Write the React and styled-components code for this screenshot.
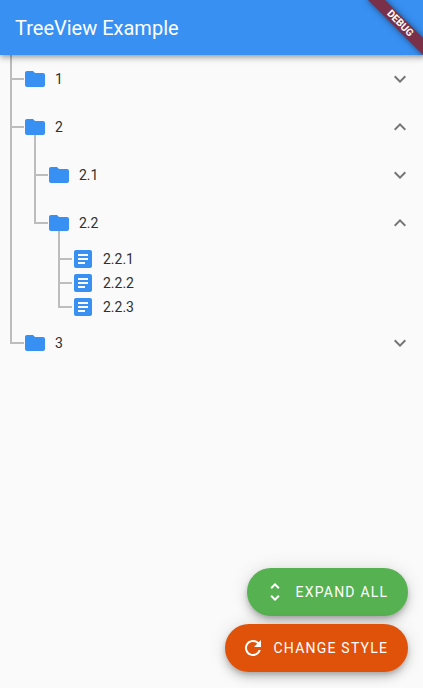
import React, { useState } from "react";
import styled, { createGlobalStyle, css } from "styled-components";

const GlobalStyle = createGlobalStyle`
  *, *::before, *::after { box-sizing: border-box; }
  body {
    margin: 0;
    background: #fafafa;
    font-family: Roboto, "Liberation Sans", sans-serif;
    color: #303030;
  }
`;

const BLUE = "#3890f2";
const LINE = "#bdbdbd";

const Page = styled.div`
  position: relative;
  display: flex;
  flex-direction: column;
  height: 100vh;
  overflow: hidden;
`;

const AppBar = styled.header`
  z-index: 1;
  flex: none;
  display: flex;
  align-items: center;
  height: 55px;
  padding: 0 15px;
  background: ${BLUE};
  box-shadow: 0 2px 4px -1px rgba(0, 0, 0, 0.2), 0 4px 5px rgba(0, 0, 0, 0.14),
    0 1px 10px rgba(0, 0, 0, 0.12);
`;

const Title = styled.h1`
  margin: 0;
  color: #fff;
  font-size: 20px;
  font-weight: 400;
  line-height: 24px;
`;

const DebugBanner = styled.div`
  position: absolute;
  z-index: 2;
  top: 26.5px;
  right: -40px;
  width: 80px;
  height: 12px;
  transform-origin: 40px -26.5px;
  transform: rotate(45deg);
  background: #7b3049;
  box-shadow: 0 0 6px rgba(0, 0, 0, 0.5);
  color: #fff;
  font-size: 10.2px;
  font-weight: 700;
  line-height: 12px;
  text-align: center;
`;

const Tree = styled.ul`
  flex: 1;
  margin: 0 0 0 -1px;
  padding: 0;
  list-style: none;
`;

const Branch = styled.ul`
  margin: 0;
  padding: 0;
  list-style: none;
`;

const NodeItem = styled.li`
  display: flex;
`;

const Gutter = styled.div`
  flex: none;
  display: flex;
  flex-direction: column;
  width: 14px;
  margin: 0 -1px 0 11px;
`;

const Elbow = styled.div`
  height: ${(p) => (p.$leaf ? 13 : 25)}px;
  border-left: 2px solid ${LINE};
  border-bottom: 2px solid ${LINE};
`;

const Trunk = styled.div`
  flex: 1;
  border-left: 2px solid ${(p) => (p.$last ? "transparent" : LINE)};
`;

const NodeBody = styled.div`
  flex: 1;
`;

const Row = styled.div`
  display: flex;
  align-items: center;
  gap: 8px;
  height: ${(p) => (p.$leaf ? 24 : 48)}px;
  padding-right: 11px;
  font-size: 14px;
  line-height: 20px;
  ${(p) => !p.$leaf && css`cursor: pointer;`}
`;

const IconSlot = styled.div`
  display: grid;
  grid-template-rows: 1fr 24px 1fr;
  width: 24px;
  height: 100%;
`;

const Stem = styled.div`
  grid-row: 3;
  width: 2px;
  margin: -4px 0 0 11px;
  background: ${LINE};
`;

const Label = styled.span`
  flex: 1;
`;

const Svg = styled.svg`
  display: block;
  flex: none;
  grid-row: 2;
  width: 24px;
  height: 24px;
  fill: ${(p) => p.$color};
`;

const Actions = styled.div`
  flex: none;
  display: flex;
  flex-direction: column;
  align-items: flex-end;
  gap: 8px;
  padding: 0 15px 16px;
`;

const ActionButton = styled.button`
  display: flex;
  align-items: center;
  gap: 8.5px;
  width: ${(p) => p.$width}px;
  height: 48px;
  padding: 0 0 0 16px;
  border: 0;
  border-radius: 24px;
  background: ${(p) => p.$color};
  box-shadow: 0 3px 5px -1px rgba(0, 0, 0, 0.2), 0 6px 10px rgba(0, 0, 0, 0.14),
    0 1px 18px rgba(0, 0, 0, 0.12);
  color: #fff;
  font: 400 14px/20px Roboto, "Liberation Sans", sans-serif;
  letter-spacing: 1.22px;
  white-space: nowrap;
  cursor: pointer;
`;

const PATHS = {
  folder:
    "M10 4H4c-1.1 0-1.99.9-1.99 2L2 18c0 1.1.9 2 2 2h16c1.1 0 2-.9 2-2V8c0-1.1-.9-2-2-2h-8l-2-2z",
  article:
    "M19 3H5c-1.1 0-2 .9-2 2v14c0 1.1.9 2 2 2h14c1.1 0 2-.9 2-2V5c0-1.1-.9-2-2-2zm-5 14H7v-2h7v2zm3-4H7v-2h10v2zm0-4H7V7h10v2z",
  down: "M16.59 8.59L12 13.17 7.41 8.59 6 10l6 6 6-6z",
  up: "M12 8l-6 6 1.41 1.41L12 10.83l4.59 4.58L18 14z",
  unfold:
    "M12 5.83L15.17 9l1.41-1.41L12 3 7.41 7.59 8.83 9 12 5.83zm0 12.34L8.83 15l-1.41 1.41L12 21l4.59-4.59L15.17 15 12 18.17z",
  refresh:
    "M17.65 6.35C16.2 4.9 14.21 4 12 4c-4.42 0-7.99 3.58-7.99 8s3.57 8 7.99 8c3.73 0 6.84-2.55 7.73-6h-2.08c-.82 2.33-3.04 4-5.65 4-3.31 0-6-2.69-6-6s2.69-6 6-6c1.66 0 3.14.69 4.22 1.78L13 11h7V4l-2.35 2.35z",
};

const Icon = ({ name, color }) => (
  <Svg viewBox="0 0 24 24" $color={color} aria-hidden="true">
    <path d={PATHS[name]} />
  </Svg>
);

const nodes = [
  { label: "1", children: [] },
  {
    label: "2",
    children: [
      { label: "2.1", children: [] },
      {
        label: "2.2",
        children: [{ label: "2.2.1" }, { label: "2.2.2" }, { label: "2.2.3" }],
      },
    ],
  },
  { label: "3", children: [] },
];

function TreeNode({ node, last, open, onToggle }) {
  const leaf = !node.children;
  const expanded = !leaf && open.includes(node.label);
  return (
    <NodeItem>
      <Gutter>
        <Elbow $leaf={leaf} />
        <Trunk $last={last} />
      </Gutter>
      <NodeBody>
        <Row $leaf={leaf} onClick={leaf ? undefined : () => onToggle(node.label)}>
          <IconSlot>
            <Icon name={leaf ? "article" : "folder"} color={BLUE} />
            {expanded && node.children.length > 0 && <Stem />}
          </IconSlot>
          <Label>{node.label}</Label>
          {!leaf && <Icon name={expanded ? "up" : "down"} color="#757575" />}
        </Row>
        {expanded && (
          <Branch>
            {node.children.map((child, i) => (
              <TreeNode
                key={child.label}
                node={child}
                last={i === node.children.length - 1}
                open={open}
                onToggle={onToggle}
              />
            ))}
          </Branch>
        )}
      </NodeBody>
    </NodeItem>
  );
}

export default function App() {
  const [open, setOpen] = useState(["2", "2.2"]);
  const toggle = (id) =>
    setOpen((ids) => (ids.includes(id) ? ids.filter((x) => x !== id) : [...ids, id]));

  return (
    <>
      <GlobalStyle />
      <Page>
        <AppBar>
          <Title>TreeView Example</Title>
        </AppBar>
        <DebugBanner>DEBUG</DebugBanner>
        <Tree>
          {nodes.map((node, i) => (
            <TreeNode
              key={node.label}
              node={node}
              last={i === nodes.length - 1}
              open={open}
              onToggle={toggle}
            />
          ))}
        </Tree>
        <Actions>
          <ActionButton
            $color="#56b150"
            $width={161}
            onClick={() => setOpen(["1", "2", "2.1", "2.2", "3"])}
          >
            <Icon name="unfold" color="#fff" />
            EXPAND ALL
          </ActionButton>
          <ActionButton $color="#e0520a" $width={183}>
            <Icon name="refresh" color="#fff" />
            CHANGE STYLE
          </ActionButton>
        </Actions>
      </Page>
    </>
  );
}
